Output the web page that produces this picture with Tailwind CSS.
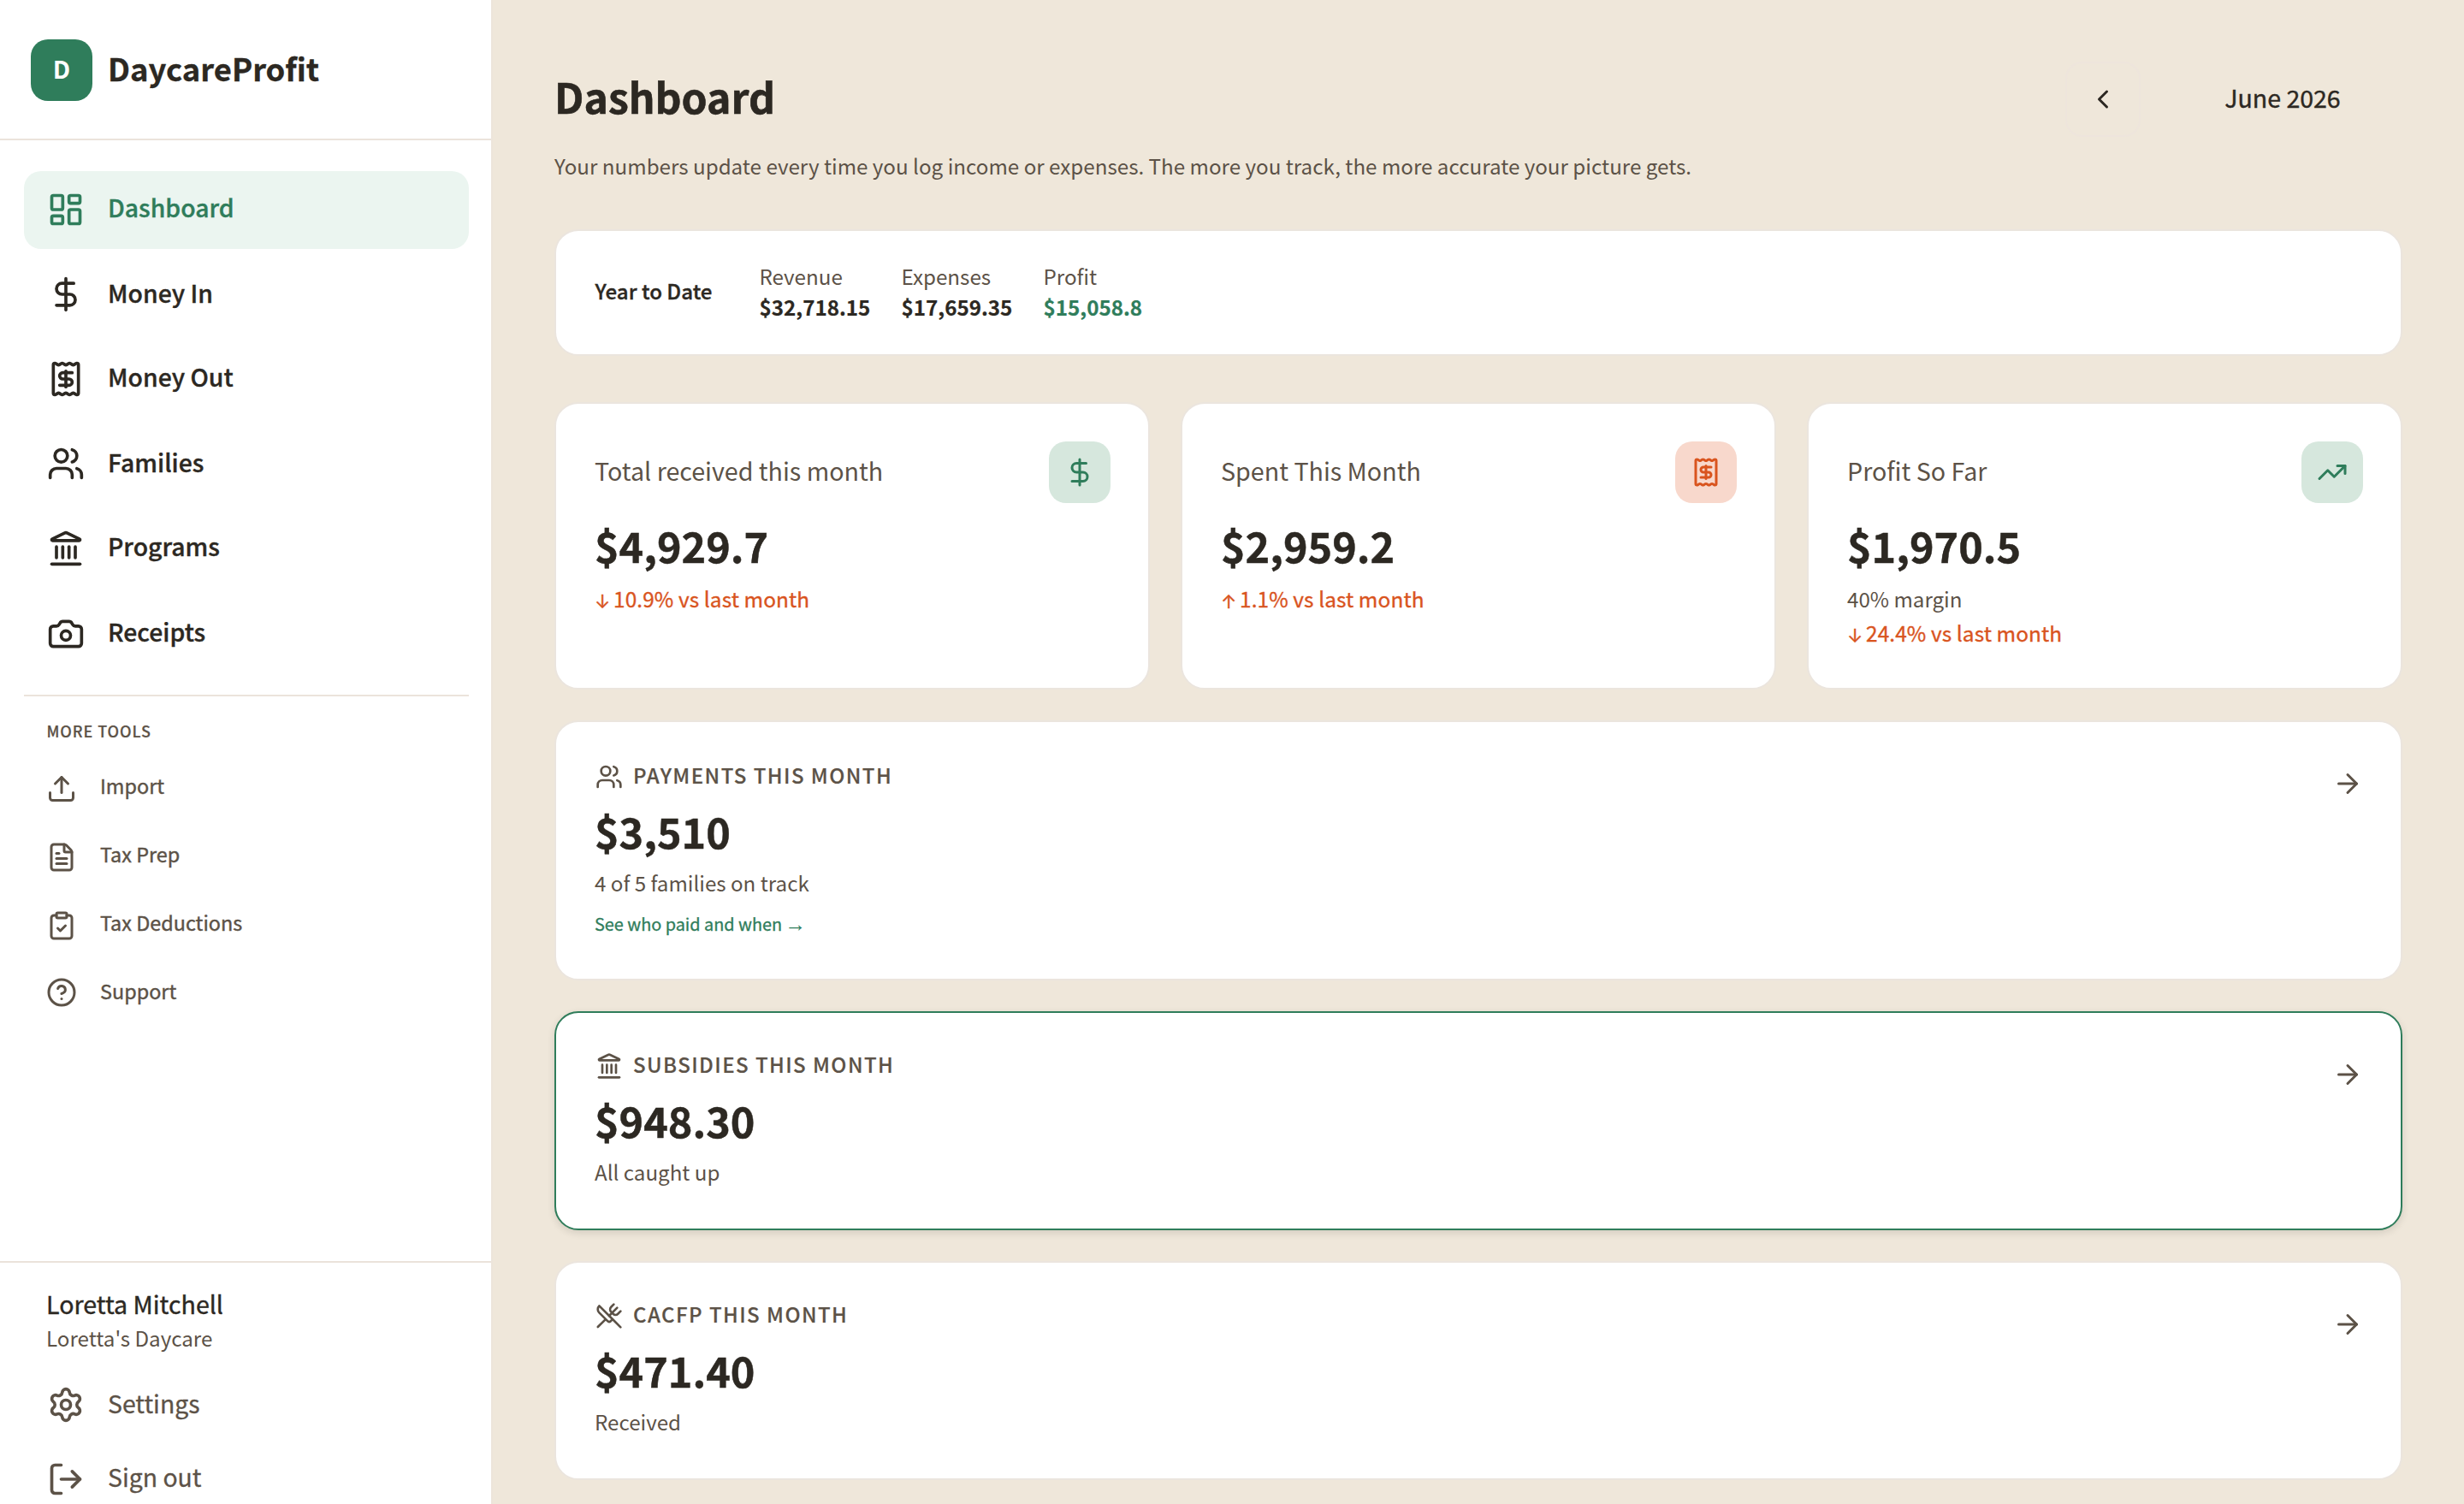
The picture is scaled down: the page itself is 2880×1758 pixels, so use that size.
<!DOCTYPE html>
<html lang="en">
<head>
<meta charset="utf-8">
<title>DaycareProfit</title>
<script src="https://cdn.jsdelivr.net/npm/@tailwindcss/browser@4"></script>
</head>
<body class="bg-[#efe7da] text-[#2c2822] font-['Noto_Sans_CJK_SC',sans-serif]">
<svg class="hidden" xmlns="http://www.w3.org/2000/svg">
  <symbol id="dashboard" viewBox="0 0 24 24"><rect width="7" height="9" x="3" y="3" rx="1"/><rect width="7" height="5" x="14" y="3" rx="1"/><rect width="7" height="9" x="14" y="12" rx="1"/><rect width="7" height="5" x="3" y="16" rx="1"/></symbol>
  <symbol id="dollar" viewBox="0 0 24 24"><path d="M12 2v20"/><path d="M17 5H9.5a3.5 3.5 0 0 0 0 7h5a3.5 3.5 0 0 1 0 7H6"/></symbol>
  <symbol id="receipt" viewBox="0 0 24 24"><path d="M4 3a1 1 0 0 1 1-1 1.3 1.3 0 0 1 .7.2l.933.6a1.3 1.3 0 0 0 1.4 0l.934-.6a1.3 1.3 0 0 1 1.4 0l.933.6a1.3 1.3 0 0 0 1.4 0l.933-.6a1.3 1.3 0 0 1 1.4 0l.934.6a1.3 1.3 0 0 0 1.4 0l.933-.6A1.3 1.3 0 0 1 19 2a1 1 0 0 1 1 1v18a1 1 0 0 1-1 1 1.3 1.3 0 0 1-.7-.2l-.933-.6a1.3 1.3 0 0 0-1.4 0l-.934.6a1.3 1.3 0 0 1-1.4 0l-.933-.6a1.3 1.3 0 0 0-1.4 0l-.933.6a1.3 1.3 0 0 1-1.4 0l-.934-.6a1.3 1.3 0 0 0-1.4 0l-.933.6a1.3 1.3 0 0 1-.7.2 1 1 0 0 1-1-1z"/><path d="M16 8h-6a2 2 0 1 0 0 4h4a2 2 0 1 1 0 4H8"/><path d="M12 17V7"/></symbol>
  <symbol id="users" viewBox="0 0 24 24"><path d="M16 21v-2a4 4 0 0 0-4-4H6a4 4 0 0 0-4 4v2"/><path d="M16 3.128a4 4 0 0 1 0 7.744"/><path d="M22 21v-2a4 4 0 0 0-3-3.87"/><circle cx="9" cy="7" r="4"/></symbol>
  <symbol id="landmark" viewBox="0 0 24 24"><path d="M10 18v-7"/><path d="M11.12 2.198a2 2 0 0 1 1.76.006l7.866 3.847c.476.233.31.949-.22.949H3.474c-.53 0-.695-.716-.22-.949z"/><path d="M14 18v-7"/><path d="M18 18v-7"/><path d="M3 22h18"/><path d="M6 18v-7"/></symbol>
  <symbol id="camera" viewBox="0 0 24 24"><path d="M13.997 4a2 2 0 0 1 1.76 1.05l.486.9A2 2 0 0 0 18.003 7H20a2 2 0 0 1 2 2v9a2 2 0 0 1-2 2H4a2 2 0 0 1-2-2V9a2 2 0 0 1 2-2h1.997a2 2 0 0 0 1.759-1.048l.489-.904A2 2 0 0 1 10.004 4z"/><circle cx="12" cy="13" r="3"/></symbol>
  <symbol id="upload" viewBox="0 0 24 24"><path d="M12 3v12"/><path d="m17 8-5-5-5 5"/><path d="M21 15v4a2 2 0 0 1-2 2H5a2 2 0 0 1-2-2v-4"/></symbol>
  <symbol id="file" viewBox="0 0 24 24"><path d="M6 22a2 2 0 0 1-2-2V4a2 2 0 0 1 2-2h8a2.4 2.4 0 0 1 1.704.706l3.588 3.588A2.4 2.4 0 0 1 20 8v12a2 2 0 0 1-2 2z"/><path d="M14 2v5a1 1 0 0 0 1 1h5"/><path d="M10 9H8"/><path d="M16 13H8"/><path d="M16 17H8"/></symbol>
  <symbol id="clipboard" viewBox="0 0 24 24"><rect width="8" height="4" x="8" y="2" rx="1"/><path d="M16 4h2a2 2 0 0 1 2 2v14a2 2 0 0 1-2 2H6a2 2 0 0 1-2-2V6a2 2 0 0 1 2-2h2"/><path d="m9 14 2 2 4-4"/></symbol>
  <symbol id="help" viewBox="0 0 24 24"><circle cx="12" cy="12" r="10"/><path d="M9.09 9a3 3 0 0 1 5.83 1c0 2-3 3-3 3"/><path d="M12 17h.01"/></symbol>
  <symbol id="settings" viewBox="0 0 24 24"><path d="M9.671 4.136a2.34 2.34 0 0 1 4.659 0 2.34 2.34 0 0 0 3.319 1.915 2.34 2.34 0 0 1 2.33 4.033 2.34 2.34 0 0 0 0 3.831 2.34 2.34 0 0 1-2.33 4.033 2.34 2.34 0 0 0-3.319 1.915 2.34 2.34 0 0 1-4.659 0 2.34 2.34 0 0 0-3.32-1.915 2.34 2.34 0 0 1-2.33-4.033 2.34 2.34 0 0 0 0-3.831A2.34 2.34 0 0 1 6.35 6.051a2.34 2.34 0 0 0 3.319-1.915"/><circle cx="12" cy="12" r="3"/></symbol>
  <symbol id="logout" viewBox="0 0 24 24"><path d="m16 17 5-5-5-5"/><path d="M21 12H9"/><path d="M9 21H5a2 2 0 0 1-2-2V5a2 2 0 0 1 2-2h4"/></symbol>
  <symbol id="trending" viewBox="0 0 24 24"><path d="M16 7h6v6"/><path d="m22 7-8.5 8.5-5-5L2 17"/></symbol>
  <symbol id="arrow" viewBox="0 0 24 24"><path d="M5 12h14"/><path d="m12 5 7 7-7 7"/></symbol>
  <symbol id="chevron" viewBox="0 0 24 24"><path d="m15 18-6-6 6-6"/></symbol>
  <symbol id="utensils" viewBox="0 0 24 24"><path d="m16 2-2.3 2.3a3 3 0 0 0 0 4.2l1.8 1.8a3 3 0 0 0 4.2 0L22 8"/><path d="M15 15 3.3 3.3a4.2 4.2 0 0 0 0 6l7.3 7.3c.7.7 2 .7 2.8 0L15 15Zm0 0 7 7"/><path d="m2.1 21.8 6.4-6.3"/><path d="m19 5-7 7"/></symbol>
</svg>

<div class="flex h-[1758px] w-[2880px] overflow-hidden">
  <aside class="flex h-full w-[576px] shrink-0 flex-col border-r-2 border-[#ede5db] bg-white">
    <div class="flex h-[164px] shrink-0 items-center gap-[18px] border-b-2 border-[#ebe3db] pt-[2px] pl-9">
      <div class="flex size-[72px] items-center justify-center rounded-[20px] bg-[#2f7d5b] pb-[5px] text-[28.5px] leading-10 font-bold text-white">D</div>
      <div class="pb-[7px] text-[36.4px] leading-[52px] font-bold [-webkit-text-stroke:0.3px]">DaycareProfit</div>
    </div>

    <nav class="flex flex-col pt-9 pr-[26px] pl-7">
      <div class="flex flex-col gap-2 text-[28.35px] leading-10 font-medium [-webkit-text-stroke:0.35px]">
        <a class="flex h-[91.2px] items-center gap-[27.5px] rounded-[20px] bg-[#ebf5f0] pl-[26.5px] text-[#2f7d5b]"><svg class="mb-[2px] size-11 fill-none stroke-current stroke-2 [stroke-linecap:round] [stroke-linejoin:round]"><use href="#dashboard"/></svg><span class="pb-[8px]">Dashboard</span></a>
        <a class="flex h-[91.2px] items-center gap-[27.5px] pl-[26.5px]"><svg class="mb-[2px] size-11 fill-none stroke-current stroke-2 [stroke-linecap:round] [stroke-linejoin:round]"><use href="#dollar"/></svg><span class="pb-[6.5px]">Money In</span></a>
        <a class="flex h-[91.2px] items-center gap-[27.5px] pl-[26.5px]"><svg class="mb-[2px] size-11 fill-none stroke-current stroke-2 [stroke-linecap:round] [stroke-linejoin:round]"><use href="#receipt"/></svg><span class="pb-[8px]">Money Out</span></a>
        <a class="flex h-[91.2px] items-center gap-[27.5px] pl-[26.5px]"><svg class="mb-[2px] size-11 fill-none stroke-current stroke-2 [stroke-linecap:round] [stroke-linejoin:round]"><use href="#users"/></svg><span class="pb-[7px]">Families</span></a>
        <a class="flex h-[91.2px] items-center gap-[27.5px] pl-[26.5px]"><svg class="mb-[2px] size-11 fill-none stroke-current stroke-2 [stroke-linecap:round] [stroke-linejoin:round]"><use href="#landmark"/></svg><span class="pb-[8px]">Programs</span></a>
        <a class="flex h-[91.2px] items-center gap-[27.5px] pl-[26.5px]"><svg class="mb-[2px] size-11 fill-none stroke-current stroke-2 [stroke-linecap:round] [stroke-linejoin:round]"><use href="#camera"/></svg><span class="pb-[8px]">Receipts</span></a>
      </div>
      <div class="mt-[24.8px] border-t-2 border-[#ebe3db] pt-5 text-[#5c5247]">
        <div class="pb-2 pl-[26.5px] text-[18px] leading-10 font-medium tracking-[0.9px] [-webkit-text-stroke:0.2px]">MORE TOOLS</div>
        <div class="flex flex-col pl-[26px] text-[23.4px] leading-8 [-webkit-text-stroke:0.4px]">
          <a class="flex h-20 items-center gap-[27px]"><svg class="size-9 fill-none stroke-current stroke-2 [stroke-linecap:round] [stroke-linejoin:round]"><use href="#upload"/></svg><span class="pb-[8px]">Import</span></a>
          <a class="flex h-20 items-center gap-[27px]"><svg class="size-9 fill-none stroke-current stroke-2 [stroke-linecap:round] [stroke-linejoin:round]"><use href="#file"/></svg><span class="pb-[8px]">Tax Prep</span></a>
          <a class="flex h-20 items-center gap-[27px]"><svg class="size-9 fill-none stroke-current stroke-2 [stroke-linecap:round] [stroke-linejoin:round]"><use href="#clipboard"/></svg><span class="pb-[8px]">Tax Deductions</span></a>
          <a class="flex h-20 items-center gap-[27px]"><svg class="mb-[3px] size-9 fill-none stroke-current stroke-2 [stroke-linecap:round] [stroke-linejoin:round]"><use href="#help"/></svg><span class="pb-[8px]">Support</span></a>
        </div>
      </div>
    </nav>

    <div class="mt-auto h-[284px] shrink-0 overflow-hidden border-t-2 border-[#ebe3db] pt-7 pl-[54px] text-[#5c5247]">
      <div class="text-[28.6px] leading-10 text-[#2c2822] [-webkit-text-stroke:0.4px]">Loretta Mitchell</div>
      <div class="text-[24.2px] leading-10">Loretta's Daycare</div>
      <div class="mt-[15px] flex h-[86.4px] items-center gap-[27.5px] pl-[0.5px] text-[28.4px] leading-10 [-webkit-text-stroke:0.3px]"><svg class="size-11 fill-none stroke-current stroke-2 [stroke-linecap:round] [stroke-linejoin:round]"><use href="#settings"/></svg><span class="pb-[5px]">Settings</span></div>
      <div class="flex h-[86.4px] items-center gap-[27.5px] pl-[0.5px] text-[28.4px] leading-10 [-webkit-text-stroke:0.3px]"><svg class="size-11 fill-none stroke-current stroke-2 [stroke-linecap:round] [stroke-linejoin:round]"><use href="#logout"/></svg><span class="pb-[5px]">Sign out</span></div>
    </div>
  </aside>

  <main class="flex grow flex-col px-[72px] pt-[72px]">
    <header class="flex h-[88px] items-center justify-between">
      <h1 class="pb-[9px] text-[48.2px] leading-[72px] font-bold [-webkit-text-stroke:0.6px]">Dashboard</h1>
      <div class="flex items-center gap-[26px]">
        <div class="flex size-[88px] items-center justify-center rounded-[20px] border-2 border-[#eee5dc]"><svg class="size-9 fill-none stroke-current stroke-2 [stroke-linecap:round] [stroke-linejoin:round]"><use href="#chevron"/></svg></div>
        <div class="w-[280px] pb-[5px] text-center text-[28.5px] leading-10 [-webkit-text-stroke:0.4px]">June 2026</div>
      </div>
    </header>
    <p class="mt-[14px] text-[24.18px] leading-10 text-[#5c5247]">Your numbers update every time you log income or expenses. The more you track, the more accurate your picture gets.</p>

    <section class="mt-[54px] flex h-[148px] shrink-0 items-center rounded-[28px] border-2 border-[#ebe5de] bg-white pl-[45.5px] text-[24.2px] leading-9">
      <div class="w-[192px] pb-[5px] text-[24.1px] font-medium [-webkit-text-stroke:0.35px]">Year to Date</div>
      <div class="w-[166px] pb-[3px]"><div class="text-[#5c5247]">Revenue</div><div class="font-bold [-webkit-text-stroke:0.2px]">$32,718.15</div></div>
      <div class="w-[166px] pb-[3px]"><div class="text-[#5c5247]">Expenses</div><div class="font-bold [-webkit-text-stroke:0.2px]">$17,659.35</div></div>
      <div class="w-[166px] pb-[3px]"><div class="text-[#5c5247]">Profit</div><div class="font-bold text-[#2f7d5b] [-webkit-text-stroke:0.2px]">$15,058.8</div></div>
    </section>

    <section class="mt-[54px] grid h-[336px] shrink-0 grid-cols-3 gap-9">
      <div class="rounded-[28px] border-2 border-[#ebe5de] bg-white p-11">
        <div class="flex items-center justify-between"><div class="pb-[4px] pl-px text-[28.65px] leading-10 text-[#5c5247]">Total received this month</div><div class="flex size-[72px] items-center justify-center rounded-[20px] bg-[#d6e7dd] text-[#2f7d5b]"><svg class="size-9 fill-none stroke-current stroke-2 [stroke-linecap:round] [stroke-linejoin:round]"><use href="#dollar"/></svg></div></div>
        <div class="mt-[19px] pl-px text-[48.5px] leading-[60px] font-bold [-webkit-text-stroke:0.5px]">$4,929.7</div>
        <div class="mt-[13px] flex pl-px text-[24.4px] leading-10 text-[#d9541e] [-webkit-text-stroke:0.35px]"><span class="w-[22px] pt-[3px] font-['Inter'] text-[22px]">↓</span><span class="tracking-[0.1px]">10.9% vs last month</span></div>
      </div>
      <div class="rounded-[28px] border-2 border-[#ebe5de] bg-white p-11">
        <div class="flex items-center justify-between"><div class="pb-[4px] pl-px text-[28.65px] leading-10 text-[#5c5247]">Spent This Month</div><div class="flex size-[72px] items-center justify-center rounded-[20px] bg-[#f8d8cc] text-[#d9541e]"><svg class="size-9 fill-none stroke-current stroke-2 [stroke-linecap:round] [stroke-linejoin:round]"><use href="#receipt"/></svg></div></div>
        <div class="mt-[19px] pl-px text-[48.5px] leading-[60px] font-bold [-webkit-text-stroke:0.5px]">$2,959.2</div>
        <div class="mt-[13px] flex pl-px text-[24.4px] leading-10 text-[#d9541e] [-webkit-text-stroke:0.35px]"><span class="w-[22px] pt-[3px] font-['Inter'] text-[22px]">↑</span><span class="tracking-[0.1px]">1.1% vs last month</span></div>
      </div>
      <div class="rounded-[28px] border-2 border-[#ebe5de] bg-white p-11">
        <div class="flex items-center justify-between"><div class="pb-[4px] pl-px text-[28.65px] leading-10 text-[#5c5247]">Profit So Far</div><div class="flex size-[72px] items-center justify-center rounded-[20px] bg-[#d6e7dd] text-[#2f7d5b]"><svg class="size-9 fill-none stroke-current stroke-2 [stroke-linecap:round] [stroke-linejoin:round]"><use href="#trending"/></svg></div></div>
        <div class="mt-[19px] pl-px text-[48.5px] leading-[60px] font-bold [-webkit-text-stroke:0.5px]">$1,970.5</div>
        <div class="mt-[13px] pl-px text-[24.15px] leading-10 text-[#5c5247]">40% margin</div>
        <div class="flex h-10 pl-px text-[24.4px] leading-10 text-[#d9541e] [-webkit-text-stroke:0.35px]"><span class="w-[22px] pt-[3px] font-['Inter'] text-[22px]">↓</span><span class="tracking-[0.1px]">24.4% vs last month</span></div>
      </div>
    </section>

    <section class="mt-9 flex h-[304px] shrink-0 justify-between rounded-[28px] border-2 border-[#ebe5de] bg-white p-11">
      <div class="pt-[2px] pl-px">
        <div class="flex h-9 items-center gap-[11px] pl-px text-[#5c5247]"><svg class="size-8 fill-none stroke-current stroke-2 [stroke-linecap:round] [stroke-linejoin:round]"><use href="#users"/></svg><span class="pb-[5px] pl-px text-[24px] leading-9 font-medium tracking-[1.45px] [-webkit-text-stroke:0.2px]">PAYMENTS THIS MONTH</span></div>
        <div class="mt-[15px] text-[48.5px] leading-[60px] font-bold [-webkit-text-stroke:0.5px]">$3,510</div>
        <div class="mt-[11px] text-[24.15px] leading-10 text-[#5c5247]">4 of 5 families on track</div>
        <div class="mt-[13px] flex text-[19.85px] leading-[30px] text-[#2f7d5b] [-webkit-text-stroke:0.3px]"><span>See who paid and when</span><span class="pl-[3px] font-['Liberation_Sans'] text-[25px] [-webkit-text-stroke:0]">→</span></div>
      </div>
      <svg class="mt-[10px] size-9 fill-none stroke-[#5c5247] stroke-2 [stroke-linecap:round] [stroke-linejoin:round]"><use href="#arrow"/></svg>
    </section>

    <section class="mt-9 flex h-[256px] shrink-0 justify-between rounded-[28px] border-2 border-[#2f7d5b] bg-white p-11 shadow-[0_3px_8px_rgba(44,40,34,0.14)]">
      <div class="pl-px">
        <div class="flex h-9 items-center gap-[11px] pl-px text-[#5c5247]"><svg class="size-8 fill-none stroke-current stroke-2 [stroke-linecap:round] [stroke-linejoin:round]"><use href="#landmark"/></svg><span class="pb-[5px] pl-px text-[24px] leading-9 font-medium tracking-[1.45px] [-webkit-text-stroke:0.2px]">SUBSIDIES THIS MONTH</span></div>
        <div class="mt-[15px] text-[48.5px] leading-[60px] font-bold [-webkit-text-stroke:0.5px]">$948.30</div>
        <div class="mt-[11px] text-[24.15px] leading-10 text-[#5c5247]">All caught up</div>
      </div>
      <svg class="mt-[10px] size-9 fill-none stroke-[#5c5247] stroke-2 [stroke-linecap:round] [stroke-linejoin:round]"><use href="#arrow"/></svg>
    </section>

    <section class="mt-9 flex h-[256px] shrink-0 justify-between rounded-[28px] border-2 border-[#ebe5de] bg-white p-11">
      <div class="pl-px">
        <div class="flex h-9 items-center gap-[11px] pl-px text-[#5c5247]"><svg class="size-8 fill-none stroke-current stroke-2 [stroke-linecap:round] [stroke-linejoin:round]"><use href="#utensils"/></svg><span class="pb-[5px] pl-px text-[24px] leading-9 font-medium tracking-[1.45px] [-webkit-text-stroke:0.2px]">CACFP THIS MONTH</span></div>
        <div class="mt-[15px] text-[48.5px] leading-[60px] font-bold [-webkit-text-stroke:0.5px]">$471.40</div>
        <div class="mt-[11px] text-[24.15px] leading-10 text-[#5c5247]">Received</div>
      </div>
      <svg class="mt-[10px] size-9 fill-none stroke-[#5c5247] stroke-2 [stroke-linecap:round] [stroke-linejoin:round]"><use href="#arrow"/></svg>
    </section>
  </main>
</div>
</body>
</html>
